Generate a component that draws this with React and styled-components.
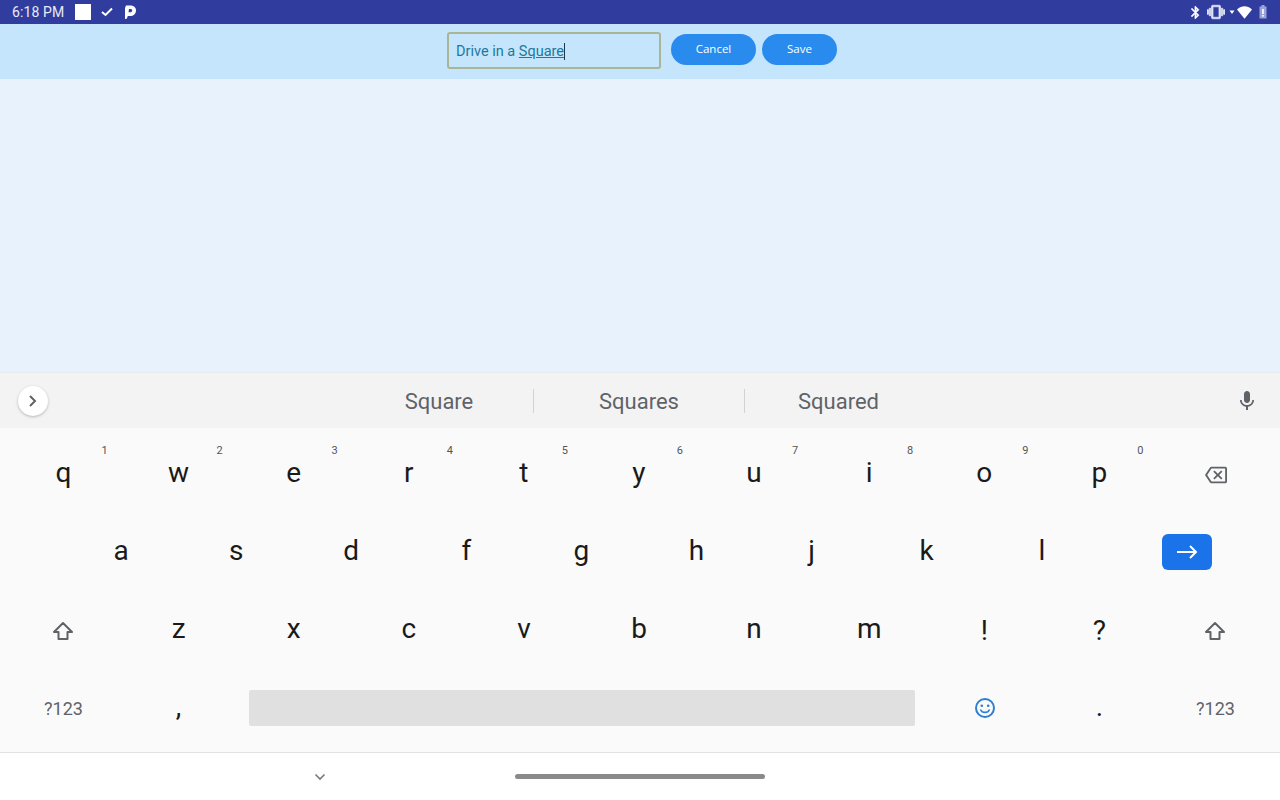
import React from 'react'
import styled, { createGlobalStyle } from 'styled-components'

const GlobalStyle = createGlobalStyle`
  html, body {
    margin: 0;
    padding: 0;
    height: 100%;
    overflow: hidden;
    font-family: Roboto, "Liberation Sans", sans-serif;
  }
`;

const Screen = styled.div`
  width: 1280px;
  height: 800px;
  display: flex;
  flex-direction: column;
  background: #fff;
`;

const StatusBar = styled.div`
  height: 24px;
  flex: none;
  display: flex;
  align-items: center;
  padding: 0 13px 0 12px;
  background: #303d9f;
  color: #fff;
`;

const Clock = styled.span`
  font-size: 14px;
  letter-spacing: 0.1px;
  width: 63px;
  color: #e8eaf6;
`;

const WhiteSquare = styled.span`
  width: 16px;
  height: 16px;
  background: #fff;
`;

const StatusGlyph = styled.svg`
  flex: none;
  margin-left: ${({ $left }) => $left || 0}px;
`;

const RightIcons = styled.div`
  margin-left: auto;
  display: flex;
  align-items: center;
`;

const Toolbar = styled.div`
  height: 55px;
  flex: none;
  box-sizing: border-box;
  display: flex;
  align-items: center;
  justify-content: center;
  padding: 0 0 3px 4px;
  background: #c5e5fc;
`;

const TextBox = styled.div`
  box-sizing: border-box;
  width: 214px;
  height: 37px;
  margin-right: 10px;
  padding: 2px 7px 0;
  display: flex;
  align-items: center;
  border: 2px solid #a9b594;
  border-radius: 3px;
  font-size: 14.5px;
  color: #1b7a9e;
  white-space: pre;
`;

const Composing = styled.span`
  text-decoration: underline;
  border-right: 1px solid #1a3a4a;
`;

const ActionButton = styled.button`
  width: ${({ $width }) => $width}px;
  height: 31px;
  margin: -1px ${({ $gap }) => $gap || 0}px 0 0;
  padding: 0 0 3px;
  border: 0;
  border-radius: 16px;
  background: #2a8bee;
  color: #fff;
  font-family: "Open Sans", sans-serif;
  font-size: 11.5px;
`;

const Content = styled.div`
  flex: 1;
  background: #e8f2fc;
`;

const SuggestionStrip = styled.div`
  height: 56px;
  flex: none;
  box-sizing: border-box;
  display: flex;
  align-items: center;
  padding: 0 21px 0 18px;
  background: #f3f3f3;
  border-top: 1px solid #e6ebf0;
`;

const ExpandButton = styled.div`
  width: 30px;
  height: 30px;
  margin-right: 297px;
  border-radius: 50%;
  background: #fff;
  box-shadow: 0 1px 3px rgba(0, 0, 0, 0.25);
  display: flex;
  align-items: center;
  justify-content: center;
`;

const Suggestion = styled.div`
  box-sizing: border-box;
  width: ${({ $width }) => $width}px;
  height: 24px;
  padding-top: 1px;
  display: flex;
  align-items: center;
  justify-content: center;
  font-size: 22px;
  color: #5f6368;
  border-right: ${({ $divider }) => ($divider ? '1px solid #d0d2d4' : '0')};
`;

const MicSlot = styled.div`
  margin-left: auto;
  display: flex;
`;

const Keyboard = styled.div`
  height: 324px;
  flex: none;
  box-sizing: border-box;
  padding: 7px 8px 5px 6px;
  display: grid;
  grid-template-columns: repeat(22, 1fr);
  grid-auto-rows: 78px;
  background: #fafafa;
`;

const Key = styled.div`
  position: relative;
  grid-column: span ${({ $span }) => $span || 2};
  display: flex;
  align-items: center;
  justify-content: center;
  padding-bottom: 4px;
  font-size: 28px;
  color: #1a1a1a;
`;

const PunctuationKey = styled(Key)`
  padding-bottom: 0;
`;

const LabelKey = styled(Key)`
  padding: 0 0 0 ${({ $left }) => $left || 0}px;
  font-size: 18px;
  color: #5f6368;
`;

const IconKey = styled(Key)`
  padding: ${({ $top }) => $top || 0}px ${({ $right }) => $right || 0}px 0 ${({ $left }) => $left || 0}px;
`;

const KeyHint = styled.span`
  position: absolute;
  top: 9px;
  right: 13.5px;
  font-size: 11px;
  color: #555;
`;

const Spacer = styled.div`
  grid-column: span ${({ $span }) => $span};
`;

const EnterButton = styled.div`
  width: 50px;
  height: 36px;
  border-radius: 6px;
  background: #1a73e8;
  display: flex;
  align-items: center;
  justify-content: center;
`;

const SpaceBar = styled.div`
  grid-column: span 12;
  align-self: center;
  height: 36px;
  margin: 0 12px 0 13px;
  background: #e0e0e0;
  border-radius: 2px;
`;

const NavBar = styled.div`
  height: 48px;
  flex: none;
  box-sizing: border-box;
  display: flex;
  align-items: center;
  padding: 0 0 0 314px;
  background: #fff;
  border-top: 1px solid #e2e2e2;
`;

const NavPill = styled.div`
  width: 250px;
  height: 5px;
  margin-left: 189px;
  border-radius: 3px;
  background: #8a8a8a;
`;

const Icon = ({ size = 24, fill = 'currentColor', d }) => (
  <svg width={size} height={size} viewBox="0 0 24 24" fill={fill}>
    <path d={d} />
  </svg>
);

const ShiftIcon = () => (
  <svg width="24" height="24" viewBox="0 0 24 24" fill="none" stroke="#5f6368" strokeWidth="2" strokeLinejoin="round">
    <path d="M12 4 L21 13 H16.5 V20 H7.5 V13 H3 Z" />
  </svg>
);

const EmojiIcon = () => (
  <svg width="22" height="22" viewBox="0 0 22 22" fill="none" stroke="#2f7fd0" strokeWidth="2">
    <circle cx="11" cy="11" r="9" />
    <circle cx="7.8" cy="8.8" r="1.3" fill="#2f7fd0" stroke="none" />
    <circle cx="14.2" cy="8.8" r="1.3" fill="#2f7fd0" stroke="none" />
    <path d="M6.8 13 C8 16.2 14 16.2 15.2 13" strokeWidth="1.6" strokeLinecap="round" />
  </svg>
);

const rowOne = [
  ['q', '1'], ['w', '2'], ['e', '3'], ['r', '4'], ['t', '5'],
  ['y', '6'], ['u', '7'], ['i', '8'], ['o', '9'], ['p', '0'],
];
const rowTwo = ['a', 's', 'd', 'f', 'g', 'h', 'j', 'k', 'l'];
const rowThree = ['z', 'x', 'c', 'v', 'b', 'n', 'm'];

const App = () => {
  return (
    <Screen>
      <GlobalStyle />
      <StatusBar>
        <Clock>6:18 PM</Clock>
        <WhiteSquare />
        <StatusGlyph $left={9} width="14" height="14" viewBox="0 0 14 14" fill="none" stroke="#fff" strokeWidth="2">
          <path d="M2 7 L5.5 10 L12 3.5" />
        </StatusGlyph>
        <StatusGlyph $left={9} width="14" height="16" viewBox="0 0 14 16">
          <path
            fill="#fff"
            fillRule="evenodd"
            d="M2 15 C3 15 4 14.5 4.3 13.5 L4.7 12 H7 C10.5 12 13 10 13 6.5 C13 3 10.5 1.5 7 1.5 H3 L2 4 Z M6 5 H7.5 C8.6 5 9.2 5.6 9.2 6.5 C9.2 7.6 8.4 8.3 7.3 8.3 H5.5 Z"
          />
        </StatusGlyph>
        <RightIcons>
          <StatusGlyph width="15" height="15" viewBox="0 0 24 24" fill="#fff" stroke="#fff" strokeWidth="0.8">
            <path d="M17.71 7.71L12 2h-1v7.59L6.41 5 5 6.41 10.59 12 5 17.59 6.41 19 11 14.41V22h1l5.71-5.71-4.3-4.29 4.3-4.29zM13 5.83l1.88 1.88L13 9.59V5.83zm1.88 10.46L13 18.17v-3.76l1.88 1.88z" />
          </StatusGlyph>
          <StatusGlyph $left={4} width="18" height="18" viewBox="0 0 24 24" fill="#dfe3f5" stroke="#dfe3f5" strokeWidth="1">
            <path d="M0 15h2V9H0v6zm3 2h2V7H3v10zm19-8v6h2V9h-2zm-3 8h2V7h-2v10zM16.5 3h-9C6.67 3 6 3.67 6 4.5v15c0 .83.67 1.5 1.5 1.5h9c.83 0 1.5-.67 1.5-1.5v-15c0-.83-.67-1.5-1.5-1.5zM16 19H8V5h8v14z" />
          </StatusGlyph>
          <StatusGlyph $left={4} width="6" height="6" viewBox="0 0 24 24" fill="#fff">
            <path d="M2 6 H22 L12 20 Z" />
          </StatusGlyph>
          <StatusGlyph $left={2} width="15" height="15" viewBox="0 0 24 24" fill="#fff">
            <path d="M12 22 L24 7 C20 3.5 16 2 12 2 S4 3.5 0 7 Z" />
          </StatusGlyph>
          <StatusGlyph $left={7} width="8" height="14" viewBox="0 0 8 14">
            <rect x="2.5" y="0" width="3" height="2" fill="#9aa3d8" />
            <rect x="0.5" y="1.5" width="7" height="12" fill="#9aa3d8" />
            <rect x="3.2" y="4" width="1.6" height="5" fill="#fff" />
            <rect x="3.2" y="10" width="1.6" height="1.6" fill="#fff" />
          </StatusGlyph>
        </RightIcons>
      </StatusBar>

      <Toolbar>
        <TextBox>
          Drive in a <Composing>Square</Composing>
        </TextBox>
        <ActionButton $width={85} $gap={6}>Cancel</ActionButton>
        <ActionButton $width={75}>Save</ActionButton>
      </Toolbar>

      <Content />

      <SuggestionStrip>
        <ExpandButton>
          <svg width="14" height="14" viewBox="0 0 14 14" fill="none" stroke="#5f6368" strokeWidth="2">
            <path d="M4 2 L9 7 L4 12" />
          </svg>
        </ExpandButton>
        <Suggestion $width={189} $divider>Square</Suggestion>
        <Suggestion $width={211} $divider>Squares</Suggestion>
        <Suggestion $width={187}>Squared</Suggestion>
        <MicSlot>
          <Icon fill="#5f6368" d="M12 14c1.66 0 2.99-1.34 2.99-3L15 5c0-1.66-1.34-3-3-3S9 3.34 9 5v6c0 1.66 1.34 3 3 3zm5.3-3c0 3-2.54 5.1-5.3 5.1S6.7 14 6.7 11H5c0 3.41 2.72 6.23 6 6.72V21h2v-3.28c3.28-.48 6-3.3 6-6.72h-1.7z" />
        </MicSlot>
      </SuggestionStrip>

      <Keyboard>
        {rowOne.map(([letter, hint]) => (
          <Key key={letter}>
            {letter}
            <KeyHint>{hint}</KeyHint>
          </Key>
        ))}
        <IconKey $top={2} $left={3}>
          <Icon size={22} fill="#5f6368" d="M22 3H7c-.69 0-1.23.35-1.59.88L0 12l5.41 8.11c.36.53.9.89 1.59.89h15c1.1 0 2-.9 2-2V5c0-1.1-.9-2-2-2zm0 16H7.07L2.4 12l4.66-7H22v14zm-11.59-2L14 13.41 17.59 17 19 15.59 15.41 12 19 8.41 17.59 7 14 10.59 10.41 7 9 8.41 12.59 12 9 15.59z" />
        </IconKey>

        <Spacer $span={1} />
        {rowTwo.map((letter) => <Key key={letter}>{letter}</Key>)}
        <IconKey $span={3} $left={2}>
          <EnterButton>
            <svg width="22" height="16" viewBox="0 0 22 16" fill="none" stroke="#fff" strokeWidth="2">
              <path d="M1 8 H20 M14 2 L20 8 L14 14" />
            </svg>
          </EnterButton>
        </IconKey>

        <IconKey $top={2} $right={2}><ShiftIcon /></IconKey>
        {rowThree.map((letter) => <Key key={letter}>{letter}</Key>)}
        <PunctuationKey>!</PunctuationKey>
        <PunctuationKey>?</PunctuationKey>
        <IconKey $top={2} $left={1}><ShiftIcon /></IconKey>

        <LabelKey>?123</LabelKey>
        <Key>,</Key>
        <SpaceBar />
        <IconKey $left={2}><EmojiIcon /></IconKey>
        <Key>.</Key>
        <LabelKey $left={2}>?123</LabelKey>
      </Keyboard>

      <NavBar>
        <svg width="12" height="8" viewBox="0 0 12 8" fill="none" stroke="#7a7a7a" strokeWidth="1.6">
          <path d="M1.5 1.5 L6 6 L10.5 1.5" />
        </svg>
        <NavPill />
      </NavBar>
    </Screen>
  );
}

export default App;
